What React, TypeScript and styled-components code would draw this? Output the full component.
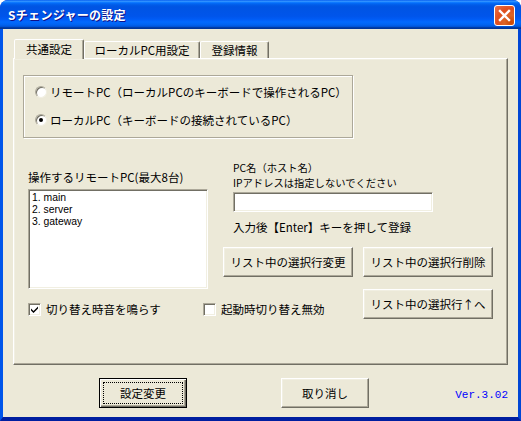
import styled, { createGlobalStyle, css } from "styled-components";

const GlobalStyle = createGlobalStyle`
  html, body {
    margin: 0;
    padding: 0;
    background: #ffffff;
  }
  body {
    font-family: "Noto Sans CJK JP", "Noto Sans", sans-serif;
    font-size: 11.5px;
    color: #000;
  }
`;

const raised = css`
  border-style: solid;
  border-width: 1px;
  border-color: #ffffff #716f64 #716f64 #ffffff;
  box-shadow: inset -1px -1px 0 #aca899, inset 1px 1px 0 #f1efe2;
`;

const sunken = css`
  border-style: solid;
  border-width: 1px;
  border-color: #aca899 #ffffff #ffffff #aca899;
  box-shadow: inset 1px 1px 0 #716f64, inset -1px -1px 0 #f1efe2;
`;

const Window = styled.div`
  width: 521px;
  height: 421px;
  display: flex;
  flex-direction: column;
  box-sizing: border-box;
  overflow: hidden;
  border-radius: 8px 8px 0 0;
  background: #0831d9;
`;

const TitleBar = styled.div`
  height: 29px;
  flex-shrink: 0;
  display: flex;
  align-items: center;
  padding: 1px 6px 0 8px;
  box-sizing: border-box;
  background: linear-gradient(
    to bottom,
    #0058ee 0%,
    #3593ff 4%,
    #288eff 6%,
    #127dff 8%,
    #036ffc 10%,
    #0262ee 14%,
    #0057e5 20%,
    #0054e3 24%,
    #0055eb 56%,
    #005bf5 66%,
    #026afe 76%,
    #0062ef 86%,
    #0052d6 92%,
    #0040ab 94%,
    #003092 100%
  );
`;

const Title = styled.div`
  flex: 1;
  color: #ffffff;
  font-weight: bold;
  font-size: 12px;
  line-height: 14px;
  letter-spacing: 0.3px;
  text-shadow: 1px 1px 0 #0f1089;
`;

const CloseButton = styled.div`
  width: 21px;
  height: 21px;
  box-sizing: border-box;
  border: 1px solid #ffffff;
  border-radius: 3px;
  background: radial-gradient(circle at 85% 85%, #cc4600 0%, #dc6527 30%, #e04f1f 60%, #e9744f 100%);
  display: flex;
  align-items: center;
  justify-content: center;
`;

const Frame = styled.div`
  flex: 1;
  display: flex;
  flex-direction: column;
  background: #ece9d8;
  border-style: solid;
  border-width: 0 3px 4px 3px;
  border-color: #0055ea #0046d5 #001ea0 #0055ea;
  padding: 10px 10px 0 10px;
`;

const TabStrip = styled.div`
  height: 20px;
  display: flex;
  align-items: flex-end;
  margin-bottom: -1px;
  padding-left: 1px;
  position: relative;
  z-index: 1;
`;

const Tab = styled.div<{ $active?: boolean; $w: number }>`
  box-sizing: border-box;
  width: ${({ $w }) => $w}px;
  height: ${({ $active }) => ($active ? 20 : 17)}px;
  margin-bottom: ${({ $active }) => ($active ? 0 : 1)}px;
  background: #ece9d8;
  border-style: solid;
  border-width: 1px 1px 0 1px;
  border-color: #ffffff #716f64 transparent #ffffff;
  border-radius: 2px 2px 0 0;
  box-shadow: inset -1px 0 0 #aca899;
  display: flex;
  align-items: center;
  justify-content: center;
  line-height: 14px;
  padding-bottom: ${({ $active }) => ($active ? 2 : 0)}px;
`;

const Panel = styled.div`
  box-sizing: border-box;
  width: 495px;
  height: 307px;
  background: #ece9d8;
  ${raised};
  padding: 16px 0 0 9px;
`;

const GroupBox = styled.div`
  box-sizing: border-box;
  width: 330px;
  height: 63px;
  border: 1px solid #aca899;
  box-shadow: inset 1px 1px 0 #ffffff, 1px 1px 0 #ffffff;
  padding: 9px 0 0 11px;
  display: flex;
  flex-direction: column;
  gap: 14px;
`;

const OptionRow = styled.label`
  display: flex;
  align-items: center;
  gap: 3px;
  height: 14px;
  line-height: 14px;
  white-space: nowrap;
`;

const RadioDot = styled.span<{ $on?: boolean }>`
  flex-shrink: 0;
  width: 12px;
  height: 12px;
  box-sizing: border-box;
  border-radius: 50%;
  background: #ffffff;
  border: 1px solid;
  border-color: #aca899 #f1efe2 #f1efe2 #aca899;
  box-shadow: inset 1px 1px 0 #716f64;
  display: flex;
  align-items: center;
  justify-content: center;
  &::after {
    content: "";
    width: 4px;
    height: 4px;
    border-radius: 50%;
    background: ${({ $on }) => ($on ? "#000" : "transparent")};
  }
`;

const Lower = styled.div`
  display: flex;
  margin: 22px 0 0 5px;
`;

const LeftCol = styled.div`
  width: 180px;
  display: flex;
  flex-direction: column;
`;

const Caption = styled.div`
  line-height: 12px;
  white-space: nowrap;
`;

const ListCaption = styled(Caption)`
  margin-top: 11px;
  margin-bottom: 6px;
`;

const ListBox = styled.div`
  box-sizing: border-box;
  height: 100px;
  background: #ffffff;
  ${sunken};
  padding: 2px 3px;
  font-family: "Liberation Sans", Arial, sans-serif;
  font-size: 10.4px;
  line-height: 12px;
`;

const RightCol = styled.div`
  margin-left: 15px;
  display: flex;
  flex-direction: column;
`;

const HostCaption = styled.div`
  margin: 0 0 2px 10px;
  font-size: 10.3px;
  line-height: 15px;
  white-space: nowrap;
`;

const TextBox = styled.div`
  box-sizing: border-box;
  margin-left: 10px;
  width: 200px;
  height: 20px;
  background: #ffffff;
  ${sunken};
`;

const Hint = styled(Caption)`
  margin: 9px 0 0 10px;
`;

const ButtonRow = styled.div`
  display: flex;
  gap: 10px;
  margin-top: 14px;
`;

const Button = styled.div<{ $w?: number }>`
  box-sizing: border-box;
  width: ${({ $w }) => $w ?? 130}px;
  height: 30px;
  background: #ece9d8;
  ${raised};
  display: flex;
  align-items: center;
  justify-content: center;
  line-height: 14px;
  white-space: nowrap;
`;

const DefaultButton = styled.div`
  position: relative;
  box-sizing: border-box;
  width: 88px;
  height: 30px;
  background: #ece9d8;
  border: 1px solid #000000;
  box-shadow: inset 1px 1px 0 #ffffff, inset -1px -1px 0 #716f64, inset -2px -2px 0 #aca899;
  display: flex;
  align-items: center;
  justify-content: center;
  line-height: 14px;
  &::after {
    content: "";
    position: absolute;
    inset: 3px;
    border: 1px dotted #000000;
  }
`;

const CheckRow = styled.div`
  display: flex;
  align-items: flex-start;
  margin-left: 5px;
`;

const CheckItem = styled.label<{ $w: number }>`
  width: ${({ $w }) => $w}px;
  display: flex;
  align-items: center;
  gap: 5px;
  margin-top: 14px;
  line-height: 13px;
  white-space: nowrap;
`;

const CheckBox = styled.span`
  flex-shrink: 0;
  width: 13px;
  height: 13px;
  box-sizing: border-box;
  background: #ffffff;
  ${sunken};
  display: flex;
  align-items: center;
  justify-content: center;
`;

const Footer = styled.div`
  display: flex;
  align-items: center;
  padding-top: 13px;
  width: 495px;
`;

const Version = styled.div`
  margin-left: auto;
  margin-top: 4px;
  color: #0000ff;
  font-family: "Liberation Mono", "DejaVu Sans Mono", monospace;
  font-size: 11px;
  line-height: 12px;
`;

function Check() {
  return (
    <svg width="9" height="9" viewBox="0 0 9 9">
      <path d="M1 3.5 L3.5 6 L8 1.5 L8 3.5 L3.5 8 L1 5.5 Z" fill="#000" />
    </svg>
  );
}

export default function App() {
  return (
    <>
      <GlobalStyle />
      <Window>
        <TitleBar>
          <Title>Sチェンジャーの設定</Title>
          <CloseButton>
            <svg width="13" height="13" viewBox="0 0 13 13">
              <path d="M2 2 L11 11 M11 2 L2 11" stroke="#fff" strokeWidth="2.4" strokeLinecap="square" />
            </svg>
          </CloseButton>
        </TitleBar>
        <Frame>
          <TabStrip>
            <Tab $active $w={70}>共通設定</Tab>
            <Tab $w={116}>ローカルPC用設定</Tab>
            <Tab $w={69}>登録情報</Tab>
          </TabStrip>
          <Panel>
            <GroupBox>
              <OptionRow>
                <RadioDot />
                リモートPC（ローカルPCのキーボードで操作されるPC）
              </OptionRow>
              <OptionRow>
                <RadioDot $on />
                ローカルPC（キーボードの接続されているPC）
              </OptionRow>
            </GroupBox>
            <Lower>
              <LeftCol>
                <ListCaption>操作するリモートPC(最大8台)</ListCaption>
                <ListBox>
                  <div>1. main</div>
                  <div>2. server</div>
                  <div>3. gateway</div>
                </ListBox>
              </LeftCol>
              <RightCol>
                <HostCaption>
                  PC名（ホスト名）
                  <br />
                  IPアドレスは指定しないでください
                </HostCaption>
                <TextBox />
                <Hint>入力後【Enter】キーを押して登録</Hint>
                <ButtonRow>
                  <Button>リスト中の選択行変更</Button>
                  <Button>リスト中の選択行削除</Button>
                </ButtonRow>
              </RightCol>
            </Lower>
            <CheckRow>
              <CheckItem $w={175}>
                <CheckBox>
                  <Check />
                </CheckBox>
                切り替え時音を鳴らす
              </CheckItem>
              <CheckItem $w={160}>
                <CheckBox />
                起動時切り替え無効
              </CheckItem>
              <Button>リスト中の選択行↑へ</Button>
            </CheckRow>
          </Panel>
          <Footer>
            <DefaultButton style={{ marginLeft: 86 }}>設定変更</DefaultButton>
            <Button $w={88} style={{ marginLeft: 94 }}>取り消し</Button>
            <Version>Ver.3.02</Version>
          </Footer>
        </Frame>
      </Window>
    </>
  );
}
